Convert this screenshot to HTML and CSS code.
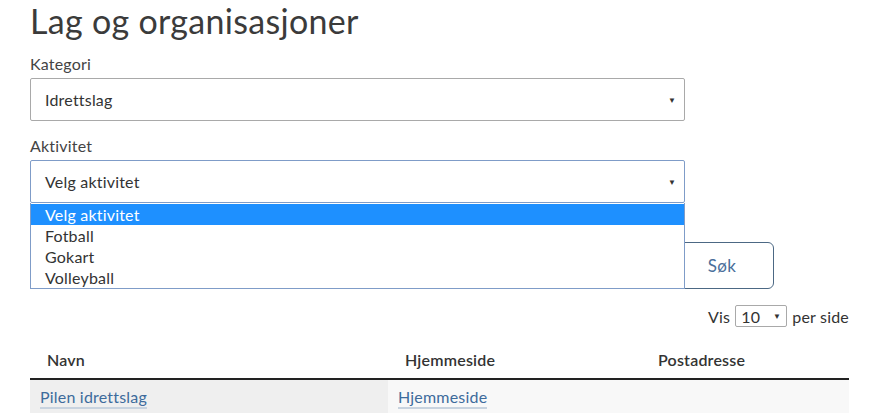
FILE: index.html
```html
<!DOCTYPE html>
<html lang="no">
<head>
<meta charset="utf-8">
<title>Lag og organisasjoner</title>
<link rel="stylesheet" href="styles.css">
</head>
<body>
<main class="page">
  <h1 class="title">Lag og organisasjoner</h1>
  <div class="field">
    <div class="label">Kategori</div>
    <div class="select">
      <span>Idrettslag</span>
      <span class="arrow">▼</span>
    </div>
  </div>
  <div class="field field-open">
    <div class="label">Aktivitet</div>
    <div class="select select-focus">
      <span>Velg aktivitet</span>
      <span class="arrow">▼</span>
    </div>
    <ul class="dropdown">
      <li class="opt opt-active">Velg aktivitet</li>
      <li class="opt">Fotball</li>
      <li class="opt">Gokart</li>
      <li class="opt">Volleyball</li>
    </ul>
  </div>
  <div class="actions">
    <button class="btn">Søk</button>
  </div>
  <div class="perpage">
    <span>Vis</span>
    <div class="mini-select"><span>10</span><span class="arrow">▼</span></div>
    <span>per side</span>
  </div>
  <table class="results">
    <thead>
      <tr><th class="c1">Navn</th><th class="c2">Hjemmeside</th><th class="c3">Postadresse</th></tr>
    </thead>
    <tbody>
      <tr><td class="c1 td-dark"><a href="#">Pilen idrettslag</a></td><td class="c2"><a href="#">Hjemmeside</a></td><td class="c3"></td></tr>
    </tbody>
  </table>
</main>
</body>
</html>
```
FILE: styles.css
```css
* { box-sizing: border-box; }
html, body { margin: 0; padding: 0; background: #fff; }
body {
  font-family: Lato, "Open Sans", sans-serif;
  color: #444;
  overflow: hidden;
  letter-spacing: 0.2px;
}
.page {
  padding: 0 22px 0 30px;
}
.title {
  margin: 0;
  font-size: 34px;
  font-weight: 400;
  line-height: 42px;
  color: #3b3b3b;
  letter-spacing: 0.3px;
}
.field {
  position: relative;
  width: 80%;
  margin-top: 12px;
}
.field + .field { margin-top: 15px; }
.label {
  font-size: 16px;
  line-height: 20px;
  margin-bottom: 4px;
  color: #444;
}
.select {
  height: 43px;
  border: 1px solid #a9a9a9;
  border-radius: 2px;
  display: flex;
  align-items: center;
  justify-content: space-between;
  padding: 0 8px 0 14px;
  font-size: 16px;
  color: #333;
}
.select-focus { border-color: #7f9cc8; }
.arrow {
  font-size: 8px;
  color: #333;
}
.dropdown {
  position: absolute;
  left: 0;
  right: 0;
  top: 100%;
  margin: 0;
  padding: 1px 0 0;
  list-style: none;
  background: #fff;
  border: 1px solid #7f9cc8;
  border-top: none;
  z-index: 2;
}
.opt {
  height: 21px;
  line-height: 21px;
  padding-left: 14px;
  font-size: 16px;
  color: #333;
}
.opt-active { background: #1e90ff; color: #fff; }
.actions {
  margin-top: 39px;
  display: flex;
}
.btn {
  margin-left: 640px;
  width: 104px;
  height: 47px;
  background: #fff;
  border: 1px solid #4c6884;
  border-radius: 6px;
  font-family: inherit;
  font-size: 17px;
  letter-spacing: 0.3px;
  color: #4a6e9a;
}
.perpage {
  margin-top: 16px;
  display: flex;
  justify-content: flex-end;
  align-items: center;
  gap: 5px;
  font-size: 16px;
  color: #333;
}
.mini-select {
  width: 52px;
  height: 22px;
  border: 1px solid #a9a9a9;
  border-radius: 2px;
  display: flex;
  align-items: center;
  justify-content: space-between;
  padding: 0 5px 0 5px;
  font-size: 16px;
}
.results {
  width: 100%;
  border-collapse: collapse;
  margin-top: 2px;
}
.results th {
  text-align: left;
  font-weight: 600;
  font-size: 16px;
  color: #333;
  height: 50px;
  vertical-align: bottom;
  padding: 0 0 9px 17px;
  border-bottom: 2px solid #222;
}
.results td {
  height: 34px;
  padding: 0 0 0 10px;
  background: #f8f8f8;
  font-size: 16px;
}
.results td.td-dark { background: #efefef; }
.c1 { width: 358px; }
.c2 { width: 253px; }
.results a {
  color: #3d6b9c;
  text-decoration: none;
  border-bottom: 2px solid #c8d3df;
  padding-bottom: 1px;
}
```
